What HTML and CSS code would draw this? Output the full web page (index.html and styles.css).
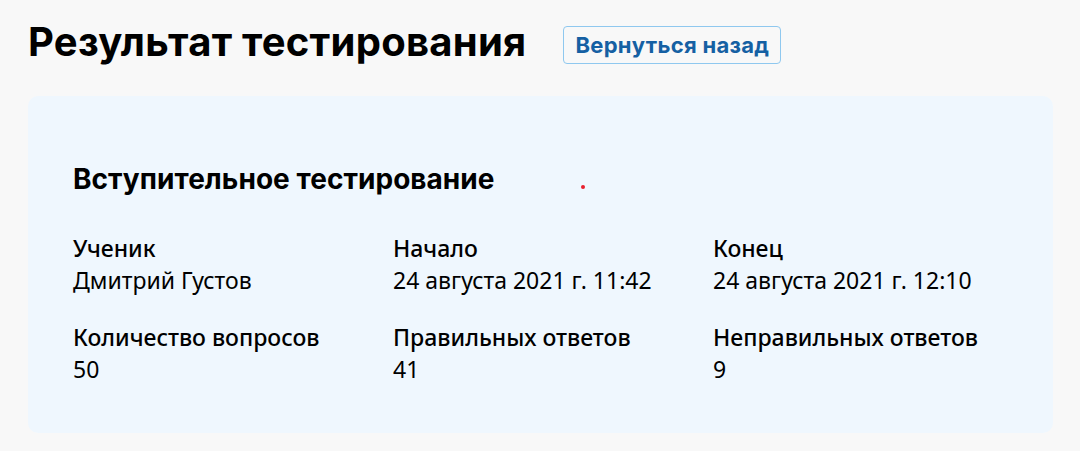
FILE: index.html
```html
<!DOCTYPE html>
<html lang="ru">
<head>
<meta charset="utf-8">
<title>Результат тестирования</title>
<link rel="stylesheet" href="styles.css">
</head>
<body>
<div class="page">
  <header class="header">
    <h1 class="title">Результат тестирования</h1>
    <a class="back-btn" href="#">Вернуться назад</a>
  </header>
  <section class="card">
    <span class="dot"></span>
    <h2 class="card-title">Вступительное тестирование</h2>
    <div class="grid">
      <div class="item"><div class="label">Ученик</div><div class="value">Дмитрий Густов</div></div>
      <div class="item"><div class="label">Начало</div><div class="value">24 августа 2021 г. 11:42</div></div>
      <div class="item"><div class="label">Конец</div><div class="value">24 августа 2021 г. 12:10</div></div>
      <div class="item"><div class="label">Количество вопросов</div><div class="value">50</div></div>
      <div class="item"><div class="label">Правильных ответов</div><div class="value">41</div></div>
      <div class="item"><div class="label">Неправильных ответов</div><div class="value">9</div></div>
    </div>
  </section>
</div>
</body>
</html>
```

FILE: styles.css
```css
html, body {
  margin: 0;
  padding: 0;
  background: #f8f8f8;
  color: #000;
}
.page {
  padding: 18px 27px 0 28px;
}
.header {
  display: flex;
  align-items: flex-start;
  gap: 37px;
}
.title {
  margin: 0;
  font-family: Inter, "Liberation Sans", sans-serif;
  font-size: 40px;
  line-height: 48px;
  font-weight: 700;
  letter-spacing: 0.25px;
}
.back-btn {
  display: inline-block;
  box-sizing: border-box;
  margin-top: 8px;
  height: 38px;
  width: 218px;
  line-height: 36px;
  padding: 0;
  border: 1px solid #8fc8ef;
  border-radius: 4px;
  color: #1560a3;
  text-decoration: none;
  font-family: Inter, "Liberation Sans", sans-serif;
  font-size: 22px;
  font-weight: 700;
  letter-spacing: 0.3px;
  text-align: center;
  white-space: nowrap;
}
.card {
  position: relative;
  margin-top: 30px;
  height: 337px;
  box-sizing: border-box;
  background: #eff7fe;
  border-radius: 10px;
  padding: 66px 45px 0 45px;
}
.dot {
  position: absolute;
  left: 553px;
  top: 89px;
  width: 4px;
  height: 4px;
  border-radius: 50%;
  background: #e8202e;
}
.card-title {
  margin: 0;
  font-family: Inter, "Liberation Sans", sans-serif;
  font-size: 28px;
  line-height: 34px;
  font-weight: 700;
  letter-spacing: 0.05px;
}
.grid {
  display: grid;
  grid-template-columns: repeat(3, 320px);
  row-gap: 25px;
  margin-top: 36px;
}
.label {
  font-family: "Noto Sans", "Open Sans", sans-serif;
  font-size: 23px;
  line-height: 32px;
  font-weight: 500;
}
.value {
  font-family: "Noto Sans", "Open Sans", sans-serif;
  font-size: 23px;
  line-height: 32px;
  font-weight: 400;
}
```
